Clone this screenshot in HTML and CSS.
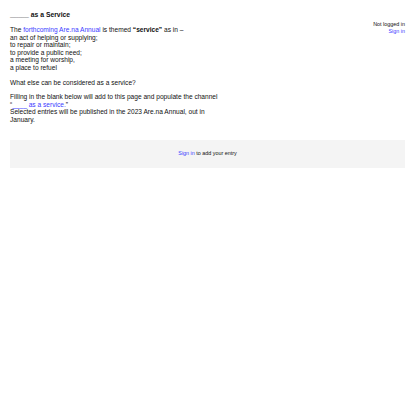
FILE: index.html
```html
<!DOCTYPE html>
<html>
<head>
<meta charset="utf-8">
<link rel="stylesheet" href="styles.css">
</head>
<body>
<div class="page">
  <div class="top">
    <div class="intro">
      <h1 class="title">_____ as a Service</h1>
      <p>The <a href="#">forthcoming Are.na Annual</a> is themed <b>“service”</b> as in –<br>
      an act of helping or supplying;<br>
      to repair or maintain;<br>
      to provide a public need;<br>
      a meeting for worship,<br>
      a place to refuel</p>
      <p>What else can be considered as a service?</p>
      <p>Filling in the blank below will add to this page and populate the channel<br>
      “<a href="#">____ as a service.</a>”<br>
      Selected entries will be published in the 2023 Are.na Annual, out in January.</p>
    </div>
    <div class="status">
      <div>Not logged in</div>
      <a href="#">Sign in</a>
    </div>
  </div>
  <div class="entry"><span><a href="#">Sign in</a> to add your entry</span></div>
</div>
</body>
</html>
```
FILE: styles.css
```css
html, body { margin: 0; padding: 0; background: #fff; }
body { font-family: "Liberation Sans", Arial, sans-serif; color: #111; font-size: 6.6px; line-height: 7.6px; }
a { color: #3b3bff; text-decoration: none; }
.page { padding: 8px 10px; }
.top { display: flex; justify-content: space-between; align-items: flex-start; }
.intro { width: 210px; }
.title { font-size: 6.8px; font-weight: bold; margin: 2px 0 7px; line-height: 9px; }
p { margin: 0 0 7px; }
.status { text-align: right; padding-top: 13px; font-size: 5.4px; line-height: 7px; }
.entry { margin-top: 9px; background: #f4f4f4; height: 28px; display: flex; align-items: center; justify-content: center; font-size: 5.4px; }
```
